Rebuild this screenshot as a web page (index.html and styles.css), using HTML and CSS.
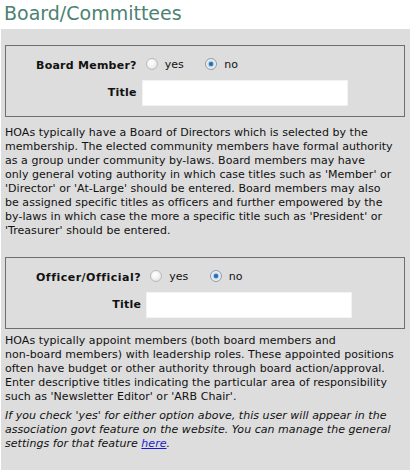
FILE: index.html
```html
<!DOCTYPE html>
<html>
<head>
<meta charset="utf-8">
<link rel="stylesheet" href="styles.css">
</head>
<body>
<h1 class="page-title">Board/Committees</h1>
<div class="panel">
  <fieldset class="group">
    <table class="form-table">
      <tr>
        <th>Board Member?</th>
        <td>
          <label class="choice"><input type="radio" class="radio" name="bm"> yes</label>
          <label class="choice"><input type="radio" class="radio" name="bm" checked> no</label>
        </td>
      </tr>
      <tr>
        <th>Title</th>
        <td><input type="text" class="title-input"></td>
      </tr>
    </table>
  </fieldset>
  <p class="help">HOAs typically have a Board of Directors which is selected by the<br>membership. The elected community members have formal authority<br>as a group under community by-laws. Board members may have<br>only general voting authority in which case titles such as 'Member' or<br>'Director' or 'At-Large' should be entered. Board members may also<br>be assigned specific titles as officers and further empowered by the<br>by-laws in which case the more a specific title such as 'President' or<br>'Treasurer' should be entered.</p>
  <fieldset class="group group-second">
    <table class="form-table">
      <tr>
        <th class="wide">Officer/Official?</th>
        <td>
          <label class="choice"><input type="radio" class="radio" name="of"> yes</label>
          <label class="choice"><input type="radio" class="radio" name="of" checked> no</label>
        </td>
      </tr>
      <tr>
        <th>Title</th>
        <td><input type="text" class="title-input"></td>
      </tr>
    </table>
  </fieldset>
  <p class="help help-second">HOAs typically appoint members (both board members and<br>non-board members) with leadership roles. These appointed positions<br>often have budget or other authority through board action/approval.<br>Enter descriptive titles indicating the particular area of responsibility<br>such as 'Newsletter Editor' or 'ARB Chair'.</p>
  <p class="help note">If you check 'yes' for either option above, this user will appear in the<br>association govt feature on the website. You can manage the general<br>settings for that feature <a href="#" class="link">here</a>.</p>
</div>
</body>
</html>
```

FILE: styles.css
```css
html, body {
  margin: 0;
  padding: 0;
  background: #ffffff;
}
body {
  font-family: "DejaVu Sans", Verdana, sans-serif;
  font-size: 11px;
  color: #111111;
  width: 419px;
  height: 474px;
  overflow: hidden;
}
.page-title {
  margin: 0;
  padding: 0 0 0 4px;
  height: 29px;
  line-height: 26px;
  font-size: 19px;
  font-weight: normal;
  color: #4b8272;
}
.panel {
  margin: 0 9px 0 1px;
  background: #dddddd;
  padding: 16px 0 8px 4px;
  height: 417px;
}
.group {
  margin: 0 5px 0 0;
  padding: 6px 0 10px 30px;
  border: 1px solid #6e6e6e;
  min-width: 0;
}
.group-second {
  margin-top: 19px;
}
.form-table {
  border-collapse: collapse;
}
.form-table th {
  text-align: right;
  font-weight: bold;
  letter-spacing: 0.25px;
  padding: 0 5px 0 0;
  white-space: nowrap;
  height: 27px;
  vertical-align: middle;
}
.form-table th.wide {
  letter-spacing: 0.5px;
}
.form-table td {
  padding: 0;
  vertical-align: middle;
  white-space: nowrap;
}
.choice {
  display: inline-flex;
  align-items: center;
  margin-right: 14px;
}
.radio {
  appearance: none;
  -webkit-appearance: none;
  width: 12px;
  height: 12px;
  margin: 0 7px 0 4px;
  border-radius: 50%;
  border: 1px solid #b9b9b9;
  background: radial-gradient(circle at 40% 35%, #ffffff 0%, #f3f3f3 45%, #d6d6d6 100%);
}
.radio:checked {
  border-color: #8a9bb0;
  background: radial-gradient(circle at 50% 50%, #1f5f9e 0%, #3a7fc4 28%, #b8cde0 36%, #f4f4f4 60%, #d9d9d9 100%);
}
.title-input {
  display: block;
  width: 206px;
  height: 26px;
  box-sizing: border-box;
  border: 1px solid #f2f2f2;
  background: #ffffff;
  margin: 0;
  padding: 0 3px;
  font: inherit;
}
.help {
  margin: 9px 0 0 0;
  line-height: 14px;
  letter-spacing: 0.04px;
  white-space: nowrap;
}
.help-second {
  margin-top: 5px;
}
.note {
  font-style: italic;
  margin-top: 5px;
}
.link {
  color: #1a1acc;
  text-decoration: underline;
}
```
